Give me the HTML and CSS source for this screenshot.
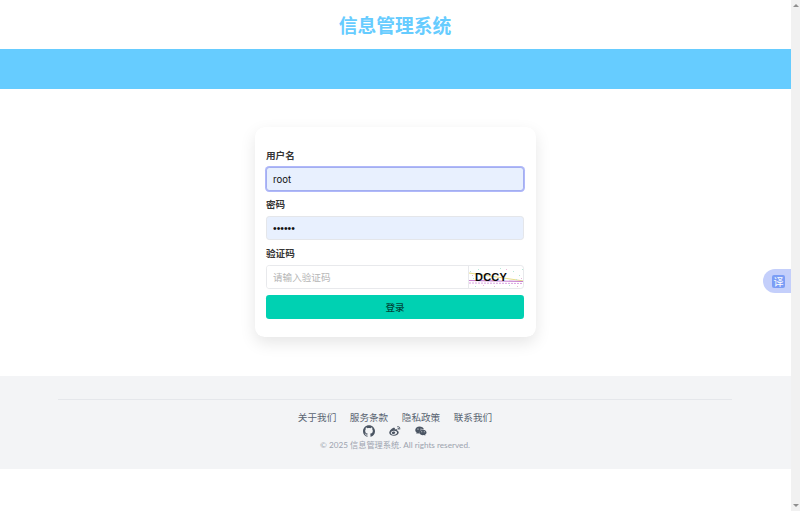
FILE: index.html
```html
<!DOCTYPE html>
<html lang="zh-CN">
<head>
    <meta charset="UTF-8">
    <meta name="viewport" content="width=device-width, initial-scale=1.0">
    <title>信息管理系统</title>
    <link rel="stylesheet" href="styles.css">
</head>
<body>
    <div class="page">
        <div class="site-header">
            <h1 class="site-title">信息管理系统</h1>
        </div>
        <div class="site-band"></div>
        <div class="login-area">
            <form class="login-card">
                <div class="field">
                    <label class="field-label">用户名</label>
                    <input class="input input-filled input-focus" type="text" value="root">
                </div>
                <div class="field">
                    <label class="field-label">密码</label>
                    <input class="input input-filled input-password" type="password" value="123456">
                </div>
                <div class="field">
                    <label class="field-label">验证码</label>
                    <div class="captcha-row">
                        <input class="input captcha-input" type="text" placeholder="请输入验证码">
                        <div class="captcha-image">
                            <svg class="captcha-noise" viewBox="0 0 55 22">
                                <path d="M0 7 L55 15" stroke="#e6dc8c" stroke-width="1" fill="none"/>
                                <path d="M0 14.500 L55 15.500" stroke="#c77fd0" stroke-width="1.200" fill="none"/>
                                <path d="M0 17 L55 17.500" stroke="#d9a3e0" stroke-width="1" fill="none" stroke-dasharray="2 1"/>
                                <path d="M1 5h1v1H1zM4 12h1v1H4zM9 3h1v1H9zM31 2h1v1h-1zM44 5h1v1h-1zM50 9h1v1h-1zM53 3h1v1h-1zM47 13h1v1h-1zM40 19h1v1h-1zM6 20h1v1H6z" fill="#b8e8d8"/>
                                <path d="M3 9h1v1H3zM14 19h1v1h-1zM37 3h1v1h-1zM52 12h1v1h-1zM25 20h1v1h-1zM48 20h1v1h-1z" fill="#e8b8d8"/>
                            </svg>
                            <span class="captcha-text">DCCY</span>
                        </div>
                    </div>
                </div>
                <button class="login-button" type="button">登录</button>
            </form>
        </div>
        <div class="site-footer">
            <div class="footer-inner">
                <div class="footer-links">
                    <a class="footer-link">关于我们</a>
                    <a class="footer-link">服务条款</a>
                    <a class="footer-link">隐私政策</a>
                    <a class="footer-link">联系我们</a>
                </div>
                <div class="footer-icons">
                    <svg class="footer-icon" viewBox="0 0 24 24"><path d="M12 .297c-6.63 0-12 5.373-12 12 0 5.303 3.438 9.8 8.205 11.385.6.113.82-.258.82-.577 0-.285-.01-1.04-.015-2.04-3.338.724-4.042-1.61-4.042-1.61C4.422 18.07 3.633 17.7 3.633 17.7c-1.087-.744.084-.729.084-.729 1.205.084 1.838 1.236 1.838 1.236 1.07 1.835 2.809 1.305 3.495.998.108-.776.417-1.305.76-1.605-2.665-.3-5.466-1.332-5.466-5.93 0-1.31.465-2.38 1.235-3.22-.135-.303-.54-1.523.105-3.176 0 0 1.005-.322 3.3 1.23.96-.267 1.98-.399 3-.405 1.02.006 2.04.138 3 .405 2.28-1.552 3.285-1.23 3.285-1.23.645 1.653.24 2.873.12 3.176.765.84 1.23 1.91 1.23 3.22 0 4.61-2.805 5.625-5.475 5.92.42.36.81 1.096.81 2.22 0 1.606-.015 2.896-.015 3.286 0 .315.21.69.825.57C20.565 22.092 24 17.592 24 12.297c0-6.627-5.373-12-12-12"/></svg>
                    <svg class="footer-icon" viewBox="0 0 24 24">
                        <path fill-rule="evenodd" d="M10 21.500c-5 0-9.500-2.400-9.500-6 0-2 1.200-4.300 3.400-6.500 2.900-2.900 6.200-4.200 7.500-2.900.6.600.6 1.600.3 2.800 1.700-.6 3.500-.9 4.500-.2 1 .7.700 1.900.2 2.900 1.500.5 3 1.500 3 3.500 0 3.200-4.300 6.400-9.400 6.400zM9.500 11.500c-3.500.3-6.200 2.400-6 4.700.2 2.300 3.200 3.800 6.700 3.500 3.500-.3 6.200-2.400 6-4.700-.2-2.300-3.200-3.800-6.700-3.500z"/>
                        <path fill-rule="evenodd" d="M8.800 13c-2 .2-3.400 1.600-3.200 3 .2 1.500 1.800 2.400 3.700 2.200 2-.2 3.400-1.700 3.200-3.100-.2-1.400-1.800-2.300-3.700-2.100z"/>
                        <path d="M17 2.500c3.500-.6 6.300 2.400 5.500 6-.1.600-.6.900-1.100.8-.5-.1-.8-.6-.7-1.100.5-2.300-1.400-4.300-3.400-3.900-.5.100-1-.2-1.100-.7-.1-.5.300-1 .8-1.100z"/>
                        <path d="M17.300 5.700c1.800-.4 3.300 1.200 2.800 3-.1.400-.5.700-.9.600-.4-.1-.7-.5-.6-.9.200-.8-.4-1.300-1-1.200-.4.100-.8-.2-.9-.6-.1-.4.200-.8.600-.9z"/>
                    </svg>
                    <svg class="footer-icon" viewBox="0 0 24 24">
                        <path fill-rule="evenodd" d="M9 3C4.300 3 .5 6.100.5 10c0 2.200 1.200 4.100 3.100 5.400L2.800 18l3-1.500c1 .3 2 .5 3.200.5h.7c-.2-.6-.3-1.300-.3-2 0-3.600 3.400-6.500 7.600-6.500h.7C17 5.200 13.400 3 9 3zM6 7a1.200 1.200 0 1 1 0 2.400A1.200 1.200 0 0 1 6 7zm6 0a1.200 1.200 0 1 1 0 2.400A1.200 1.200 0 0 1 12 7z"/>
                        <path fill-rule="evenodd" d="M16 9.500c-3.900 0-7 2.500-7 5.500s3.100 5.500 7 5.500c.8 0 1.600-.1 2.300-.3l2.400 1.300-.6-2.100c1.800-1 2.900-2.600 2.900-4.400 0-3-3.100-5.500-7-5.500zm-2.500 2.800a1 1 0 1 1 0 2 1 1 0 0 1 0-2zm5 0a1 1 0 1 1 0 2 1 1 0 0 1 0-2z"/>
                    </svg>
                </div>
                <p class="copyright">© 2025 信息管理系统. All rights reserved.</p>
            </div>
        </div>
        <div class="translate-tab"><span class="translate-mark">译</span></div>
    </div>
    <div class="scrollbar">
        <span class="scroll-arrow scroll-up"></span>
        <span class="scroll-arrow scroll-down"></span>
    </div>
</body>
</html>
```

FILE: styles.css
```css
/* Styling */
html,
body {
    height: 100%;
    margin: 0;
    overflow: hidden;
}

body {
    display: flex;
    background-color: #fff;
    color: #363636;
    font-family: Inter, "Noto Sans CJK SC", sans-serif;
    font-size: 9.6px;
}

.page {
    flex: 1;
    position: relative;
}

.scrollbar {
    width: 9px;
    background-color: #f1f1f1;
    display: flex;
    flex-direction: column;
    justify-content: space-between;
    align-items: center;
    padding: 4px 0;
    box-sizing: border-box;
}

.scroll-arrow {
    width: 0;
    height: 0;
    border-left: 3px solid transparent;
    border-right: 3px solid transparent;
}

.scroll-up {
    border-bottom: 3px solid #8f8f8f;
}

.scroll-down {
    border-top: 3px solid #8f8f8f;
}

.site-header {
    height: 49px;
    padding-right: 1px;
    box-sizing: border-box;
    display: flex;
    justify-content: center;
    align-items: center;
}

.site-title {
    margin: 0;
    font-size: 18.8px;
    font-weight: 700;
    color: #66ccff;
}

.site-band {
    height: 40px;
    background-color: #66ccff;
}

.login-area {
    display: flex;
    justify-content: center;
    padding: 38px 0 39px;
}

.login-card {
    width: 281px;
    height: 210px;
    padding: 20px 12px 0 11px;
    box-sizing: border-box;
    background-color: #fff;
    border-radius: 9.6px;
    box-shadow: 0 6px 16px rgba(10, 10, 10, 0.1), 0 0 1px rgba(10, 10, 10, 0.02);
}

.field {
    margin-bottom: 5px;
}

.field-label {
    display: block;
    height: 16px;
    margin-bottom: 4px;
    padding-top: 1px;
    box-sizing: border-box;
    line-height: 16px;
    font-weight: 600;
    font-size: 9.6px;
    color: #363636;
}

.input {
    display: block;
    width: 100%;
    height: 24px;
    padding: 0 6px;
    box-sizing: border-box;
    border: 1px solid #e4e6ea;
    border-radius: 3.2px;
    outline: none;
    font-family: Inter, "Noto Sans CJK SC", sans-serif;
    font-size: 9.6px;
    color: #363636;
    background-color: #fff;
}

.input::placeholder {
    color: #b5b5b5;
}

.input-filled {
    background-color: #e8f0fe;
    color: #111;
}

.input-focus {
    border-color: #a3aef0;
    box-shadow: 0 0 0 1px #b0b8fa;
}

.input-password {
    font-family: "Liberation Sans", sans-serif;
    font-size: 10.4px;
}

.captcha-row {
    display: flex;
    height: 24px;
    border: 1px solid #e8e9ec;
    border-radius: 3.2px;
    box-sizing: border-box;
    overflow: hidden;
}

.captcha-input {
    flex: 1;
    width: auto;
    min-width: 0;
    height: 22px;
    padding: 0 6px;
    border: none;
    border-radius: 0;
}

.captcha-image {
    width: 55px;
    height: 22px;
    position: relative;
    padding-left: 6px;
    box-sizing: border-box;
    border-left: 1px solid #e8e9ec;
    display: flex;
    align-items: center;
}

.captcha-noise {
    position: absolute;
    left: 0;
    top: 0;
    width: 55px;
    height: 22px;
}

.captcha-text {
    position: relative;
    font-family: "Liberation Sans", sans-serif;
    font-size: 11px;
    font-weight: 700;
    letter-spacing: 0.2px;
    color: #0a0a0a;
}

.login-button {
    display: block;
    width: 100%;
    height: 24px;
    margin-top: 6px;
    padding: 0;
    border: none;
    border-radius: 3.2px;
    background-color: #00d1b2;
    color: rgba(0, 0, 0, 0.7);
    font-family: Inter, "Noto Sans CJK SC", sans-serif;
    font-size: 9.6px;
    font-weight: 500;
    cursor: pointer;
}

.site-footer {
    height: 93px;
    padding-top: 23px;
    box-sizing: border-box;
    background-color: #f3f4f6;
}

.footer-inner {
    margin: 0 59px 0 58px;
    border-top: 1px solid #e5e7eb;
    padding-top: 11px;
    text-align: center;
    font-family: "Noto Sans", "Noto Sans CJK SC", sans-serif;
}

.footer-links {
    display: flex;
    justify-content: center;
    gap: 13.6px;
    line-height: 13px;
    font-size: 9.6px;
    color: #5a6472;
}

.footer-icons {
    display: flex;
    justify-content: center;
    gap: 14px;
    height: 12px;
    margin-top: 1px;
}

.footer-icon {
    width: 12px;
    height: 12px;
    fill: #4b5563;
}

.copyright {
    margin: 2px 0 0;
    line-height: 13px;
    font-family: Lato, "Noto Sans CJK SC", sans-serif;
    font-size: 8.2px;
    color: #9ca3af;
}

.translate-tab {
    position: absolute;
    right: 0;
    top: 269px;
    width: 28px;
    height: 24px;
    box-sizing: border-box;
    padding-left: 9px;
    display: flex;
    align-items: center;
    background-color: #c4cffb;
    border-radius: 12px 0 0 12px;
}

.translate-mark {
    width: 13px;
    height: 13px;
    border-radius: 2px;
    background-color: #7b9df5;
    color: #fff;
    font-family: "Noto Sans CJK SC", sans-serif;
    font-size: 10px;
    line-height: 13px;
    text-align: center;
}
```
